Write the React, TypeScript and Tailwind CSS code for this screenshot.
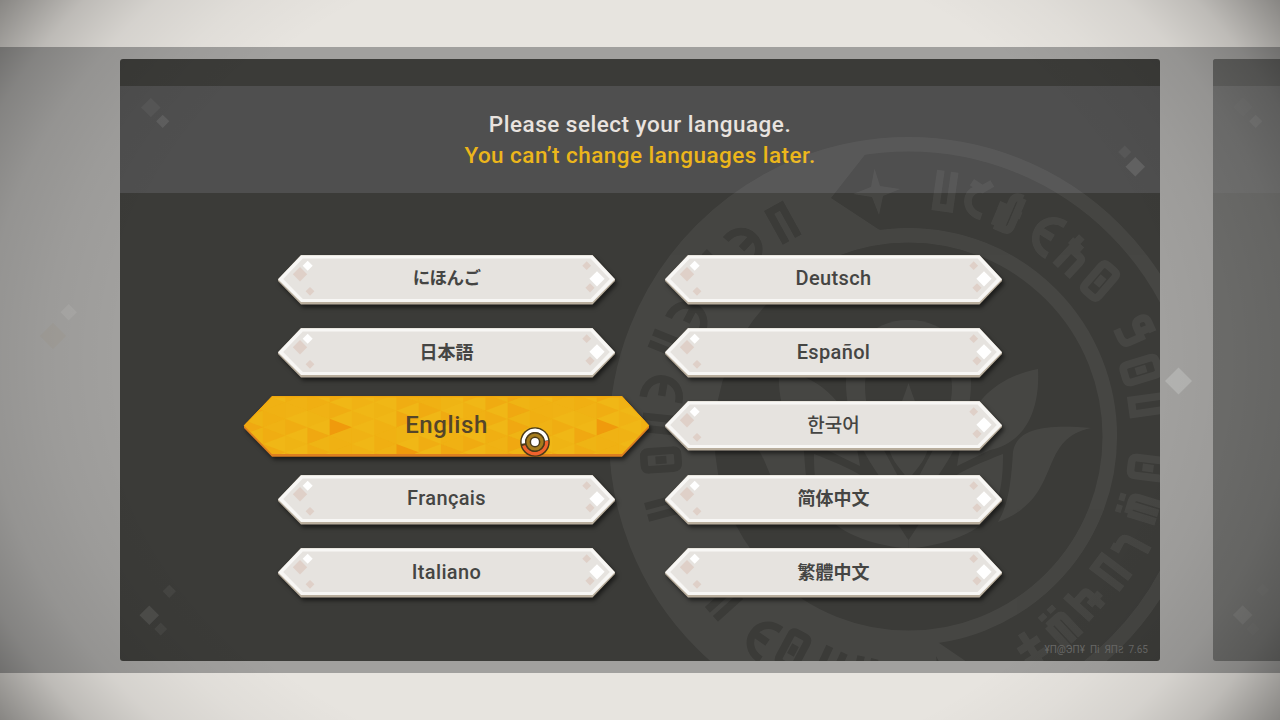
import React from "react";

type Gem = { x: number; y: number; r: number; fill: string };

function Gems({ items }: { items: Gem[] }) {
  return (
    <>
      {items.map((g, i) => (
        <path key={i} d={`M${g.x} ${g.y - g.r}l${g.r} ${g.r}l${-g.r} ${g.r}l${-g.r} ${-g.r}z`} fill={g.fill} />
      ))}
    </>
  );
}

const plateGems: Gem[] = [
  { x: 22, y: 19.3, r: 7.2, fill: "#dfd0c8" },
  { x: 29.7, y: 10.7, r: 5, fill: "#ffffff" },
  { x: 32, y: 36.3, r: 4.4, fill: "#dfd0c8" },
  { x: 308.7, y: 10.7, r: 4.4, fill: "#dfd0c8" },
  { x: 312, y: 32.8, r: 4.6, fill: "#dfd0c8" },
  { x: 319, y: 23.8, r: 7.6, fill: "#ffffff" },
];

function Plate() {
  return (
    <svg className="absolute inset-0 overflow-visible drop-shadow-[2px_3px_2px_rgba(0,0,0,0.55)]" width="337" height="50" viewBox="0 0 337 50">
      <path d="M0 24.3L23 0H314.5L337 24.3V26L314.5 49.6H23L0 26Z" fill="#b9ae9d" />
      <path d="M0 24.3L23 0.2H314.5L337 24.3L314.5 47H23Z" fill="#f8f7f5" />
      <path d="M5.2 24L24.8 3.6H312.6L331.8 24L312.6 44H24.8Z" fill="#e6e3df" />
      <Gems items={plateGems} />
    </svg>
  );
}

function facets() {
  const out: { d: string; o: number }[] = [];
  const w = 22.25;
  const s = 16.67;
  for (let c = -2; c < 17; c++) {
    const x = 85.7 + (c - 2) * w;
    const odd = Math.abs(c) % 2 === 1;
    for (let r = -1; r < 5; r++) {
      const y = (odd ? -2 : 6.2) + r * s;
      const k = ((c + 24) % 12) * 7 + ((c + 24) % 12) * (r + 2) * 3 + r * 5 + (odd ? 3 : 0);
      const a = [0.15, 0.42, 0.28, 0.1, 0.5, 0.35, 0.2][(k + 14) % 7];
      const strong = (c === 2 || c === 14) && r === 1;
      const low = c === 5 && r === 3;
      out.push({ d: `M${x} ${y}l${w} ${s / 2}l${-w} ${s / 2}z`, o: strong || low ? 1 : a });
      const b = [0.1, 0, 0.2, 0, 0, 0.15, 0][(k + 17) % 7];
      out.push({ d: `M${x + w} ${y + s / 2}v${s}l${-w} ${-s / 2}z`, o: b });
    }
  }
  return out;
}

function GoldPlate() {
  return (
    <svg className="absolute inset-0 overflow-visible drop-shadow-[2px_3px_2px_rgba(0,0,0,0.55)]" width="405" height="61" viewBox="0 0 405 61">
      <defs>
        <clipPath id="gold">
          <path d="M0 29.5L28 0.3H378L405 29.5L378 58H28Z" />
        </clipPath>
      </defs>
      <path d="M0 29.5L28 0.3H378L405 29.5V32L378 60.7H28L0 32Z" fill="#dd7f1f" />
      <g clipPath="url(#gold)">
        <rect width="405" height="60" fill="#f0b716" />
        {facets().map((f, i) => (
          <path key={i} d={f.d} fill="#f09a0c" opacity={f.o} />
        ))}
        <path d="M0 29.5L28 0.8H378L405 29.5" fill="none" stroke="#f3a90c" strokeWidth="1.4" />
      </g>
    </svg>
  );
}

function Cursor() {
  return (
    <svg className="absolute left-[276px] top-[31px]" width="30" height="30" viewBox="-15 -15 30 30">
      <circle r="14.8" fill="#4b3b18" />
      <path d="M-11.6 1.6A11.7 11.7 0 1 1 11.6 -1.6" fill="none" stroke="#fff" strokeWidth="3.4" />
      <path d="M11.6 -1A11.7 11.7 0 0 1 -11.2 3.6" fill="none" stroke="#f0622d" strokeWidth="3.4" />
      <circle r="10" fill="#4b3b18" />
      <circle r="8.6" fill="#a57c1c" />
      <circle r="5.4" fill="#4b3b18" />
      <circle r="3.9" fill="#fff" />
    </svg>
  );
}

type Rune = { k: string; x: number; y: number; a: number };

const runes: Record<string, string> = {
  u: "M-7 -20V17H7V-20",
  pi: "M-7 19V-16H7V19",
  c: "M-9 -14L3 -10L11 -18M3 -10C-13 -8 -13 16 9 17",
  f: "M-8 19V-2M-8 19H-1V-10Q-1 -17 8 -17M8 -17V13Q8 19 2 19M-12 -2H-1M5 0H13",
  e: "M12 -18C-16 -19 -16 19 12 18M-9 0H8",
  h: "M-8 -20V19M-14 -10H1M-8 -4H4Q8 -4 8 0V19",
  o: "M-9 -12Q-9 -17 -4 -17H4Q9 -17 9 -12V12Q9 17 4 17H-4Q-9 17 -9 12ZM0 -5.5V5.5",
  g: "M8 -16H-3Q-9 -16 -9 -9Q-9 -3 -3 -3H3V-16M-3 -3H8V10Q8 16 0 16H-9",
  w: "M-9 -11V18M0 -11V18M-9 -11H4Q9 -11 9 -6V18M-7 -24V-18M5 -24V-18",
  s: "M-4 -18V6Q-4 12 2 12H9V18",
  a: "M-9 -18V17M-9 -6H5Q8 -6 8 -2V17M0 6H16",
  x: "M0 -20V20M-12 -6H12M-12 8H12",
  ii: "M-6 -17V17M6 -17V17",
};

const lightRunes: Rune[] = [
  { k: "u", x: 945, y: 191, a: 8 },
  { k: "c", x: 977, y: 198, a: 15 },
  { k: "f", x: 1009, y: 211, a: 23 },
  { k: "e", x: 1046, y: 234, a: 31 },
  { k: "h", x: 1074, y: 257, a: 43 },
  { k: "o", x: 1100, y: 281, a: 41 },
  { k: "g", x: 1135, y: 331, a: 66 },
  { k: "o", x: 1141, y: 370, a: 73 },
  { k: "pi", x: 1148, y: 405, a: 262 },
  { k: "o", x: 1148, y: 468, a: 97 },
  { k: "w", x: 1141, y: 508, a: 287 },
  { k: "s", x: 1132, y: 546, a: 118 },
  { k: "pi", x: 1111, y: 572, a: 307 },
  { k: "a", x: 1085, y: 601, a: 312 },
  { k: "w", x: 1062, y: 628, a: 317 },
  { k: "x", x: 1032, y: 650, a: 327 },
];

const darkRunes: Rune[] = [
  { k: "pi", x: 783, y: 223, a: -29 },
  { k: "e", x: 747, y: 243, a: 133 },
  { k: "ii", x: 712, y: 268, a: -45 },
  { k: "e", x: 690, y: 315, a: 117 },
  { k: "ii", x: 667, y: 344, a: -68 },
  { k: "e", x: 663, y: 388, a: 100 },
  { k: "ii", x: 659, y: 424, a: -84 },
  { k: "o", x: 661, y: 460, a: -94 },
  { k: "ii", x: 663, y: 508, a: -105 },
  { k: "ii", x: 724, y: 603, a: 228 },
  { k: "e", x: 761, y: 638, a: 35 },
  { k: "o", x: 793, y: 650, a: 28 },
  { k: "h", x: 829, y: 667, a: 205 },
  { k: "pi", x: 864, y: 676, a: 192 },
];

function RuneSet({ items }: { items: Rune[] }) {
  return (
    <>
      {items.map((r, i) => (
        <path key={i} d={runes[r.k]} transform={`translate(${r.x} ${r.y}) rotate(${r.a})`} />
      ))}
    </>
  );
}

const petals =
  "M1038 369C1000 376 972 400 962 437L957 466L990 450C1026 442 1040 410 1038 369Z" +
  "M1091 428C1040 424 1017 430 1013 452C1011 485 1008 505 998 522C1065 497 1035 440 1091 428Z" +
  "M1003 454C985 461 970 467 955 476L930 508C921 520 913 534 908.5 540V548.5C940 546 975 535 990 516C1001 498 1003 478 1003 454Z" +
  "M945 452L931 476L951 437Z";

function Emblem() {
  return (
    <svg className="absolute inset-0" width="1040" height="602" viewBox="120 59 1040 602">
      <defs>
        <mask id="cut" maskUnits="userSpaceOnUse" x="560" y="100" width="700" height="700">
          <rect x="560" y="100" width="700" height="700" fill="#fff" />
          <g fill="none" stroke="#000" strokeWidth="7.6">
            <RuneSet items={darkRunes} />
          </g>
          <path d="M936 656L947 676L969 680L948 686L944 706L938 690L918 682L938 676Z" fill="#000" />
        </mask>
        <clipPath id="left">
          <path d="M865.5 154L831 198L878 229L908 242V631L939 643L986 675L951 719L900 760H560V100H850Z" />
        </clipPath>
        <mask id="cup" maskUnits="userSpaceOnUse" x="840" y="310" width="140" height="180">
          <rect x="840" y="310" width="140" height="180" fill="#fff" />
          <path d="M908.5 340C880 340 865 362 865 386C865 420 882 446 900 480H917C935 446 952 420 952 386C952 362 937 340 908.5 340Z" fill="#000" />
        </mask>
      </defs>
      <g fill="#fff" opacity="0.055">
        <g mask="url(#cut)">
          <path
            fillRule="evenodd"
            clipPath="url(#left)"
            d="M908.5 144A292.5 292.5 0 1 0 908.5 729A292.5 292.5 0 1 0 908.5 144ZM908.5 235A201.5 201.5 0 1 1 908.5 638A201.5 201.5 0 1 1 908.5 235Z"
          />
          <circle cx="908.5" cy="436.5" r="292.2" fill="none" stroke="#fff" strokeWidth="14.5" />
          <circle cx="908.5" cy="436.5" r="201.3" fill="none" stroke="#fff" strokeWidth="14.5" />
        </g>
        <path d="M874.5 168.500L880 186L900 189L883 196L879 215L872 197L853 194L871 187Z" />
        <g fill="none" stroke="#fff" strokeWidth="7.6">
          <RuneSet items={lightRunes} />
        </g>
        <path
          mask="url(#cup)"
          d="M908.5 320C870 320 846 350 846 382C846 420 862 452 880 477C888 486 929 486 937 477C955 452 971 420 971 382C971 350 947 320 908.5 320Z"
        />
        <path d="M908.5 383C902 404 889 430 889 448C892 462 902 470 908.5 480C915 470 925 462 928 448C928 430 915 404 908.5 383Z" />
        <path d={petals} />
        <path d={petals} transform="translate(1817 0) scale(-1 1)" />
      </g>
    </svg>
  );
}

const latin = "font-['Roboto'] text-[20px] font-medium tracking-[0.35px]";

type Lang = { name: string; face: string; active?: boolean };

const leftColumn: Lang[] = [
  { name: "にほんご", face: "-top-px font-['Noto_Sans_CJK_JP',sans-serif] text-[17.500px] font-bold tracking-[-0.6px]" },
  { name: "日本語", face: "-top-px font-['Noto_Sans_CJK_JP',sans-serif] text-[18px] font-bold" },
  { name: "English", face: "font-['Roboto'] text-[24px] font-medium tracking-[0.6px]", active: true },
  { name: "Français", face: latin },
  { name: "Italiano", face: latin },
];

const rightColumn: Lang[] = [
  { name: "Deutsch", face: latin },
  { name: "Español", face: latin },
  { name: "한국어", face: "-top-px font-['Noto_Sans_CJK_KR',sans-serif] text-[19px] font-medium" },
  { name: "简体中文", face: "-top-px font-['Noto_Sans_CJK_SC',sans-serif] text-[18px] font-bold" },
  { name: "繁體中文", face: "-top-px font-['Noto_Sans_CJK_TC',sans-serif] text-[18px] font-bold" },
];

function LangButton({ lang }: { lang: Lang }) {
  return (
    <div className="flex h-[73.4px] w-[337px] items-center justify-center">
      <button
        className={
          lang.active
            ? "relative z-10 flex h-[61px] w-[405px] shrink-0 items-center justify-center pb-[3px] text-[#54452a]"
            : "relative flex h-[50px] w-[337px] shrink-0 items-center justify-center pb-[3px] text-[#454543]"
        }
      >
        {lang.active ? <GoldPlate /> : <Plate />}
        <span className={`relative leading-6 whitespace-nowrap ${lang.face}`}>{lang.name}</span>
        {lang.active && <Cursor />}
      </button>
    </div>
  );
}

const panelGems: Gem[] = [
  { x: 30.7, y: 48.5, r: 9.8, fill: "#ffffff0c" },
  { x: 42.7, y: 62.3, r: 6.6, fill: "#ffffff18" },
  { x: 1004.7, y: 93, r: 6.6, fill: "#ffffff0e" },
  { x: 1015.3, y: 107.700, r: 9.8, fill: "#ffffff1c" },
  { x: 29.3, y: 556.3, r: 9.8, fill: "#ffffff18" },
  { x: 49.3, y: 532.3, r: 6.6, fill: "#ffffff0e" },
  { x: 40.7, y: 570, r: 6.4, fill: "#ffffff0e" },
];

const sideGems: Gem[] = [
  { x: 30, y: 48, r: 9.5, fill: "#ffffff05" },
  { x: 42.7, y: 62.3, r: 6.6, fill: "#ffffff10" },
  { x: 29.7, y: 556, r: 9.8, fill: "#ffffff12" },
  { x: 49.7, y: 531, r: 6.4, fill: "#ffffff05" },
  { x: 40, y: 570, r: 6.4, fill: "#ffffff05" },
];

const bandGems: Gem[] = [
  { x: 68.7, y: 265.3, r: 8.2, fill: "#ffffff14" },
  { x: 53, y: 289, r: 13, fill: "#a0806018" },
  { x: 1178.5, y: 334, r: 13.5, fill: "#ffffff30" },
];

export default function App() {
  return (
    <div className="relative flex h-[720px] w-[1280px] flex-col justify-center overflow-hidden bg-[#e7e4df]">
      <main className="relative flex h-[626px] gap-[53px] bg-[#a1a09e] pt-3 pl-[120px]">
        <section className="relative flex h-[602px] w-[1040px] shrink-0 flex-col overflow-hidden rounded-[3px] bg-[#3b3b38]">
          <div className="h-[27px] shrink-0" />
          <header className="flex h-[107px] shrink-0 flex-col items-center bg-[#4f4f4f] pt-[23px] text-center font-['Roboto'] text-[22.5px] leading-[31px] font-medium">
            <p className="tracking-[0.5px] text-[#e9e3df]">Please select your language.</p>
            <p className="tracking-[0.45px] text-[#ecb61b]">You can’t change languages later.</p>
          </header>
          <Emblem />
          <svg className="absolute inset-0" width="1040" height="602">
            <Gems items={panelGems} />
          </svg>
          <div className="relative z-10 flex justify-center gap-[50px] pt-[50px]">
            <div className="relative z-10 flex flex-col">
              {leftColumn.map((l) => (
                <LangButton key={l.name} lang={l} />
              ))}
            </div>
            <div className="flex flex-col">
              {rightColumn.map((l) => (
                <LangButton key={l.name} lang={l} />
              ))}
            </div>
          </div>
          <p className="absolute right-[12px] bottom-[4px] font-['Roboto'] text-[10px] leading-[14px] whitespace-pre text-[#6a6a68]">
            ¥П@ЭП¥  Пі  ЯПƧ  7.65
          </p>
        </section>
        <aside className="relative h-[602px] w-[1040px] shrink-0 overflow-hidden rounded-[3px] bg-[#6d6d6b]">
          <div className="h-[27px] bg-[#646462]" />
          <div className="h-[107px] bg-[#727271]" />
          <svg className="absolute inset-0" width="1040" height="602">
            <Gems items={sideGems} />
          </svg>
        </aside>
        <svg className="pointer-events-none absolute inset-0" width="1280" height="626">
          <Gems items={bandGems} />
        </svg>
      </main>
      <div className="pointer-events-none absolute inset-0 z-20 bg-[radial-gradient(ellipse_790px_640px_at_center,transparent_66%,rgba(0,0,0,0.03)_75%,rgba(0,0,0,0.08)_83%,rgba(0,0,0,0.18)_90%,rgba(0,0,0,0.45)_100%)]" />
    </div>
  );
}
